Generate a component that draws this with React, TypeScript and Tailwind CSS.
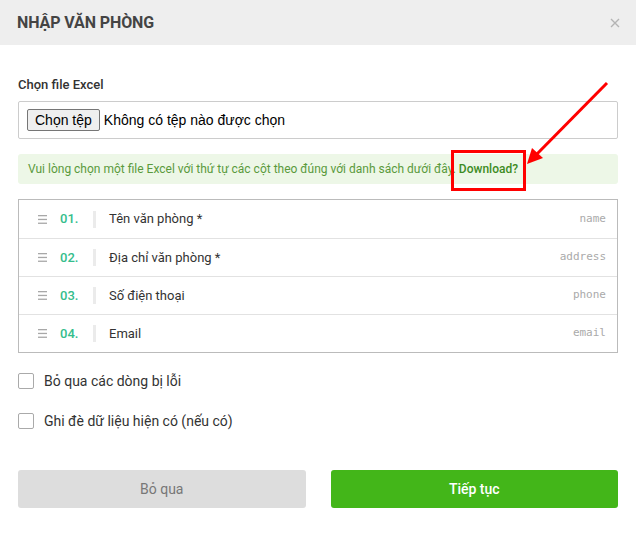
import React from "react";

const columns = [
  { no: "01.", label: "Tên văn phòng *", key: "name" },
  { no: "02.", label: "Địa chỉ văn phòng *", key: "address" },
  { no: "03.", label: "Số điện thoại", key: "phone" },
  { no: "04.", label: "Email", key: "email" },
];

const options = ["Bỏ qua các dòng bị lỗi", "Ghi đè dữ liệu hiện có (nếu có)"];

const Grip = () => (
  <svg width="9" height="9" viewBox="0 0 9 9" className="shrink-0">
    <rect x="0" y="0" width="9" height="1.3" fill="#a8a8a8" />
    <rect x="0" y="3.8" width="9" height="1.3" fill="#a8a8a8" />
    <rect x="0" y="7.6" width="9" height="1.3" fill="#a8a8a8" />
  </svg>
);

export default function App() {
  return (
    <div className="relative w-[636px] h-[537px] bg-white font-['Roboto',sans-serif] text-[#333]">
      <div className="h-[45px] bg-[#eeeeee] flex items-center justify-between pl-[17px] pr-[16px]">
        <h1 className="text-[16px] font-bold text-[#444] tracking-[-0.1px]">NHẬP VĂN PHÒNG</h1>
        <svg width="10" height="10" viewBox="0 0 10 10">
          <path d="M1 1 L9 9 M9 1 L1 9" stroke="#b4b4b4" strokeWidth="1.4" />
        </svg>
      </div>

      <div className="px-[18px] pt-[32px]">
        <label className="block text-[13px] font-medium text-[#333] leading-[15px]">Chọn file Excel</label>

        <div className="mt-[9px] h-[38px] border border-[#cccccc] rounded-[2px] flex items-center pl-[8px] font-['Liberation_Sans',Arial,sans-serif] text-[14px] text-black">
          <span className="h-[22px] px-[7px] flex items-center bg-[#efefef] border border-[#767676] rounded-[2px]">Chọn tệp</span>
          <span className="ml-[4px]">Không có tệp nào được chọn</span>
        </div>

        <div className="mt-[15px] h-[30px] bg-[#edf7e7] rounded-[3px] flex items-center pl-[10px] text-[12px] text-[#5a9a3c]">
          Vui lòng chọn một file Excel với thứ tự các cột theo đúng với danh sách dưới đây.
          <span className="ml-[3px] font-medium text-[#3d8c1f]">Download?</span>
        </div>

        <div className="mt-[15px] border border-[#bbbbbb]">
          {columns.map((c, i) => (
            <div
              key={c.key}
              className={`h-[38px] flex items-center pl-[19px] pr-[11px] ${i > 0 ? "border-t border-[#e2e2e2]" : ""}`}
            >
              <Grip />
              <span className="ml-[13px] w-[33px] text-[13px] font-medium text-[#35bd8c]">{c.no}</span>
              <span className="w-[3px] h-[17px] bg-[#ebebeb]" />
              <span className="ml-[13px] text-[13px] text-[#333]">{c.label}</span>
              <span className="ml-auto font-['DejaVu_Sans_Mono',monospace] text-[11px] text-[#aaaaaa]">{c.key}</span>
            </div>
          ))}
        </div>

        <div className="mt-[20px] flex flex-col gap-[24px]">
          {options.map((o) => (
            <label key={o} className="flex items-center h-[16px]">
              <span className="w-[16px] h-[16px] border border-[#aaaaaa] rounded-[2px] bg-white" />
              <span className="ml-[10px] text-[14px] text-[#333]">{o}</span>
            </label>
          ))}
        </div>

        <div className="mt-[41px] grid grid-cols-2 gap-[25px]">
          <button className="h-[38px] rounded-[3px] bg-[#dddddd] text-[14px] text-[#777]">Bỏ qua</button>
          <button className="h-[38px] rounded-[3px] bg-[#43b619] text-[14px] font-medium text-white">Tiếp tục</button>
        </div>
      </div>

      {/* annotation */}
      <div className="absolute left-[451px] top-[150px] w-[75px] h-[41px] border-[3px] border-[#ff0000]" />
      <svg className="absolute left-0 top-0 pointer-events-none" width="636" height="537">
        <line x1="607" y1="83" x2="534" y2="157" stroke="#ff0000" strokeWidth="3" />
        <polygon points="527,164 532,148 543,158" fill="#ff0000" />
      </svg>
    </div>
  );
}
